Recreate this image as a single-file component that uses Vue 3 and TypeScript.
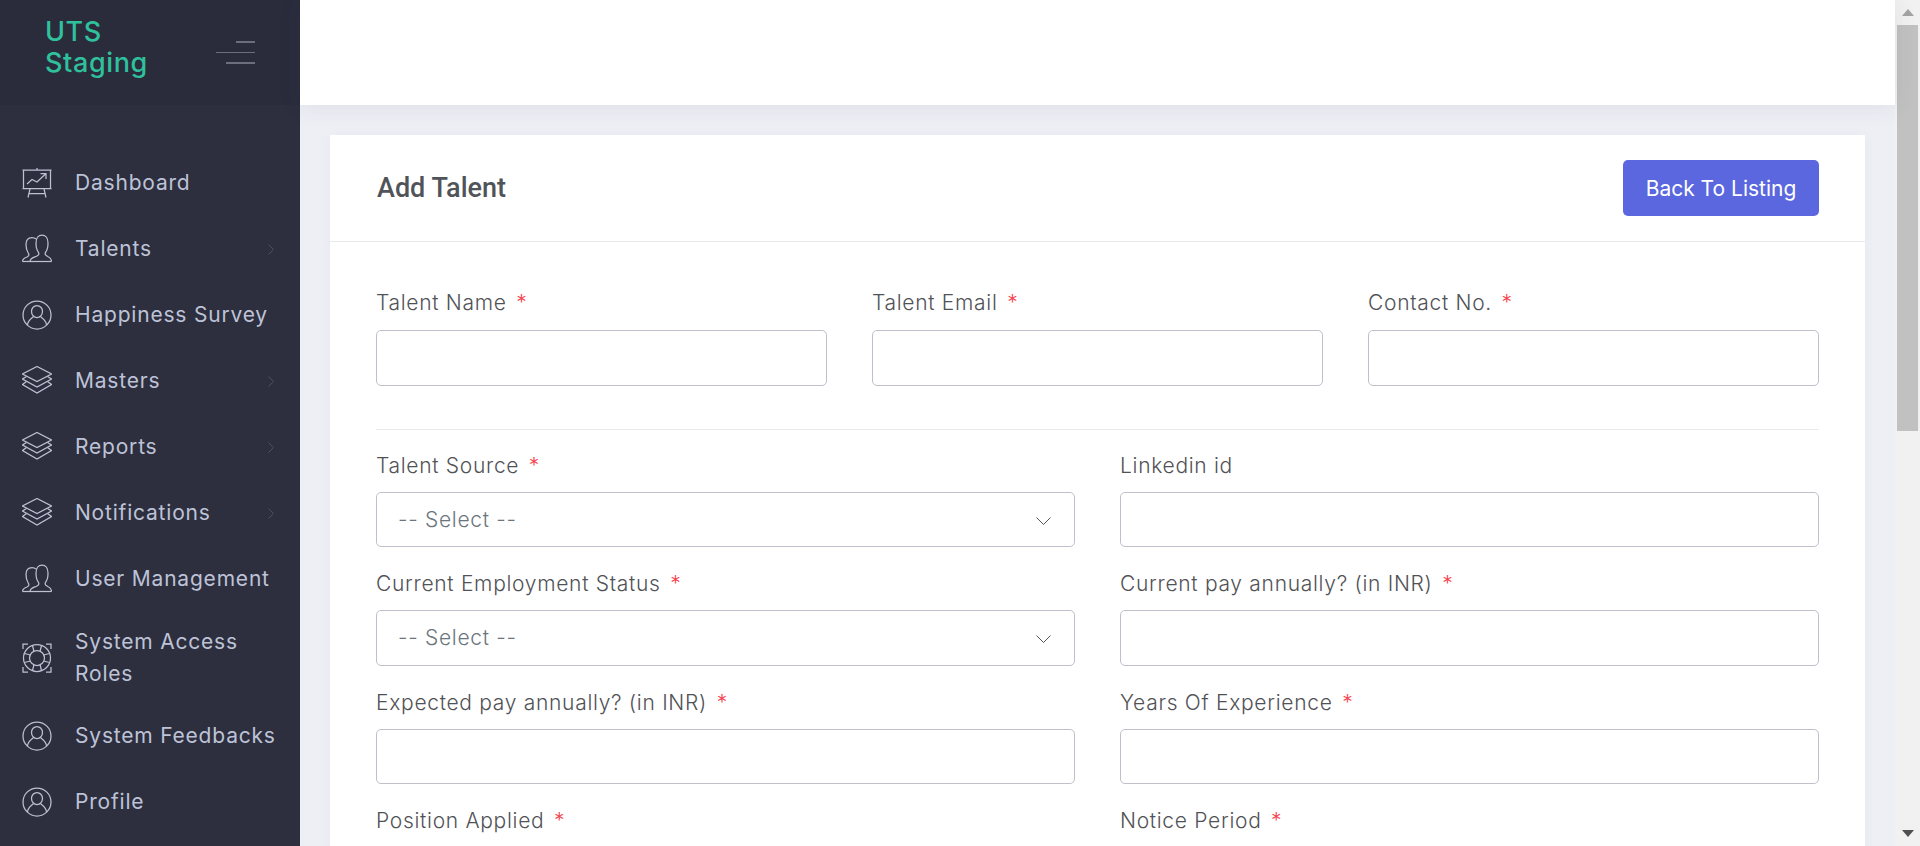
<template>
  <div class="app">
    <aside class="sidebar">
      <div class="brand">
        <div class="brand-name">UTS<br />Staging</div>
        <div class="burger"><span class="b1"></span><span class="b2"></span><span class="b3"></span></div>
      </div>
      <nav class="nav">
        <a v-for="item in navItems" :key="item.label" class="nav-item">
          <svg class="nav-icon" viewBox="0 0 30 30" fill="none">
            <path v-for="d in icons[item.icon]" :key="d" :d="d" />
          </svg>
          <span class="nav-label">{{ item.label }}</span>
          <svg v-if="item.sub" class="nav-arrow" viewBox="0 0 6 11" fill="none"><path d="M0.5 0.5 5.5 5.5 0.5 10.5" /></svg>
        </a>
      </nav>
    </aside>

    <main class="main">
      <header class="topbar"></header>
      <section class="content">
        <div class="card">
          <div class="card-head">
            <h1>Add Talent</h1>
            <button class="btn" type="button">Back To Listing</button>
          </div>
          <form class="card-body">
            <div class="grid three">
              <div v-for="f in topFields" :key="f.label" class="field">
                <label>{{ f.label }} <em v-if="f.req">*</em></label>
                <input type="text" />
              </div>
            </div>
            <hr />
            <div class="grid two">
              <div v-for="f in fields" :key="f.label" class="field">
                <label>{{ f.label }} <em v-if="f.req">*</em></label>
                <div v-if="f.select" class="select-wrap">
                  <select><option>-- Select --</option></select>
                  <svg viewBox="0 0 15 8" fill="none"><path d="M0.5 0.5 7.5 7.5 14.5 0.5" /></svg>
                </div>
                <input v-else type="text" />
              </div>
            </div>
          </form>
        </div>
      </section>
    </main>

    <div class="scrollbar">
      <div class="sb-btn"><i class="up"></i></div>
      <div class="sb-track"><div class="sb-thumb"></div></div>
      <div class="sb-btn"><i class="down"></i></div>
    </div>
  </div>
</template>

<script setup lang="ts">
interface NavItem {
  label: string;
  icon: string;
  sub?: boolean;
}

interface Field {
  label: string;
  req?: boolean;
  select?: boolean;
}

const icons: Record<string, string[]> = {
  chart: [
    'M15 0V2M0.5 2H29.5M1.5 2V20.5H28.5V2M0.5 20.5H29.5',
    'M8 21 6 29.5M22 21 24 29.5M7 25.5H23',
    'M5 16 10 11.5 15 14 24 5.5M18.5 5.5H24V11',
  ],
  users: [
    'M8 27.5C8 24 12 23.5 15 22 17 21 17.5 19.5 16 17.5 14.5 15.5 14 13 14 9 14 4 16.5 1 20 1 23.5 1 26 4 26 9 26 13 25.5 15.5 24 17.5 22.5 19.5 23 21 25 22 27 23 29.5 24 29.5 27.5',
    'M0.5 27.5C0.5 25 2 24 5 23 7 22 7.5 20.5 6 18.5 4.5 16 4 13 4 10.5 4 6 6.5 3.5 10 3.5 11.5 3.5 13 4 14 5',
    'M0.5 27.5H29.5',
  ],
  person: [
    'M15 1A14 14 0 1 1 15 29 14 14 0 1 1 15 1Z',
    'M15 5.5A5.5 6 0 1 1 15 17.5 5.5 6 0 1 1 15 5.5Z',
    'M5.5 25C5.5 21 9 18.5 11.5 16.5M18.5 16.5C21 18.5 24.5 21 24.5 25',
  ],
  layers: [
    'M15 0.5 29.5 8 15 15.5 0.5 8Z',
    'M4.5 10.5 0.5 13 15 21 29.5 13 25.5 10.5',
    'M4.5 15.5 0.5 18.5 15 27 29.5 18.5 25.5 15.5',
  ],
  buoy: [
    'M15 1.5A13.5 13.5 0 1 1 15 28.5 13.5 13.5 0 1 1 15 1.5Z',
    'M15 7.5A7.5 7.5 0 1 1 15 22.5 7.5 7.5 0 1 1 15 7.5Z',
    'M10.5 2.5 12 8.5M19.5 2.5 18 8.5M10.5 27.5 12 21.5M19.5 27.5 18 21.5',
    'M2.5 10.5 8.5 12M2.5 19.5 8.5 18M27.5 10.5 21.5 12M27.5 19.5 21.5 18',
    'M1 6V1H6M24 1H29V6M29 24V29H24M6 29H1V24',
  ],
};

const navItems: NavItem[] = [
  { label: 'Dashboard', icon: 'chart' },
  { label: 'Talents', icon: 'users', sub: true },
  { label: 'Happiness Survey', icon: 'person' },
  { label: 'Masters', icon: 'layers', sub: true },
  { label: 'Reports', icon: 'layers', sub: true },
  { label: 'Notifications', icon: 'layers', sub: true },
  { label: 'User Management', icon: 'users' },
  { label: 'System Access Roles', icon: 'buoy' },
  { label: 'System Feedbacks', icon: 'person' },
  { label: 'Profile', icon: 'person' },
];

const topFields: Field[] = [
  { label: 'Talent Name', req: true },
  { label: 'Talent Email', req: true },
  { label: 'Contact No.', req: true },
];

const fields: Field[] = [
  { label: 'Talent Source', req: true, select: true },
  { label: 'Linkedin id' },
  { label: 'Current Employment Status', req: true, select: true },
  { label: 'Current pay annually? (in INR)', req: true },
  { label: 'Expected pay annually? (in INR)', req: true },
  { label: 'Years Of Experience', req: true },
  { label: 'Position Applied', req: true },
  { label: 'Notice Period', req: true },
];
</script>

<style scoped>
.app {
  display: flex;
  height: 846px;
  overflow: hidden;
  font-family: Inter, "Liberation Sans", sans-serif;
  background: #eeeff5;
}

.sidebar {
  width: 300px;
  flex: none;
  background: #2d2e3e;
}

.brand {
  height: 105px;
  box-sizing: border-box;
  padding: 0 45px;
  background: #2a2c3c;
  display: flex;
  align-items: center;
  justify-content: space-between;
}

.brand-name {
  color: #2fc19c;
  font-size: 27px;
  font-weight: 500;
  line-height: 31px;
  letter-spacing: 0.6px;
  margin-bottom: 11px;
}

.burger {
  width: 39px;
  display: flex;
  flex-direction: column;
  align-items: flex-end;
}

.burger span {
  display: block;
  background: #6c6e80;
}

.b1 {
  width: 19px;
  height: 2px;
}

.b2 {
  width: 39px;
  height: 1px;
  margin: 9px 0;
}

.b3 {
  width: 29px;
  height: 2px;
}

.nav {
  padding-top: 45px;
}

.nav-item {
  display: flex;
  align-items: center;
  min-height: 66px;
  padding: 13.5px 20px 13.5px 22px;
  box-sizing: border-box;
  color: #bdc3d7;
  font-size: 21px;
  letter-spacing: 0.8px;
  line-height: 32px;
}

.nav-icon {
  width: 30px;
  height: 30px;
  flex: none;
  margin-right: 23px;
  stroke: #bcc1d2;
  stroke-width: 1.25;
}

.nav-label {
  flex: 1;
}

.nav-arrow {
  width: 6px;
  height: 11px;
  flex: none;
  margin-right: 6px;
  stroke: #4b4e66;
}

.main {
  flex: 1;
  min-width: 0;
  display: flex;
  flex-direction: column;
}

.topbar {
  height: 105px;
  flex: none;
  background: #fff;
  box-shadow: 0 2px 22px rgba(60, 64, 90, 0.09);
  position: relative;
}

.content {
  padding: 30px;
  min-height: 0;
}

.card {
  background: #fff;
  box-shadow: 0 0 12px rgba(60, 64, 90, 0.03);
}

.card-head {
  height: 107px;
  box-sizing: border-box;
  padding: 0 46px;
  border-bottom: 1px solid #e9eaee;
  display: flex;
  align-items: center;
  justify-content: space-between;
}

.card-head h1 {
  margin: 0 0 0 1px;
  font-family: Roboto, sans-serif;
  font-size: 27px;
  font-weight: 500;
  color: #505459;
}

.btn {
  width: 196px;
  height: 56px;
  border: 0;
  border-radius: 5px;
  background: #5a67de;
  color: #fff;
  font-family: inherit;
  font-size: 21px;
}

.card-body {
  padding: 46px 46px 40px;
}

.grid {
  display: grid;
  column-gap: 45px;
}

.three {
  grid-template-columns: repeat(3, 1fr);
}

.two {
  grid-template-columns: repeat(2, 1fr);
}

hr {
  border: 0;
  border-top: 1px solid #e9eaee;
  margin: 43px 0 21px;
}

.field {
  display: flex;
  flex-direction: column;
}

.two .field {
  margin-bottom: 22px;
}

label {
  color: #515256;
  font-size: 21px;
  font-weight: 300;
  letter-spacing: 0.7px;
  line-height: 30px;
  margin-bottom: 12px;
}

.two label {
  margin-bottom: 11px;
}

label em {
  color: #f5424d;
  font-style: normal;
  margin-left: 3px;
}

input,
select {
  width: 100%;
  height: 55.5px;
  box-sizing: border-box;
  border: 1px solid #bfc0cc;
  border-radius: 5px;
  background: #fff;
  padding: 0 21px;
  color: #6c757d;
  font-family: inherit;
  font-size: 21px;
  font-weight: 300;
  letter-spacing: 0.7px;
  appearance: none;
  outline: none;
}

.select-wrap {
  position: relative;
}

.select-wrap svg {
  position: absolute;
  right: 24px;
  top: 25px;
  width: 15px;
  height: 8px;
  stroke: #555;
}

.scrollbar {
  width: 25px;
  flex: none;
  display: flex;
  flex-direction: column;
  background: #f1f1f1;
}

.sb-btn {
  height: 25px;
  flex: none;
  display: flex;
  align-items: center;
  justify-content: center;
}

.sb-btn i {
  width: 0;
  height: 0;
  border-left: 6px solid transparent;
  border-right: 6px solid transparent;
}

.up {
  border-bottom: 7px solid #a3a3a3;
}

.down {
  border-top: 7px solid #505050;
}

.sb-track {
  flex: 1;
  padding: 0 2px;
}

.sb-thumb {
  height: 406px;
  background: #c1c1c1;
}
</style>

<style>
html,
body {
  margin: 0;
  overflow: hidden;
}
</style>
